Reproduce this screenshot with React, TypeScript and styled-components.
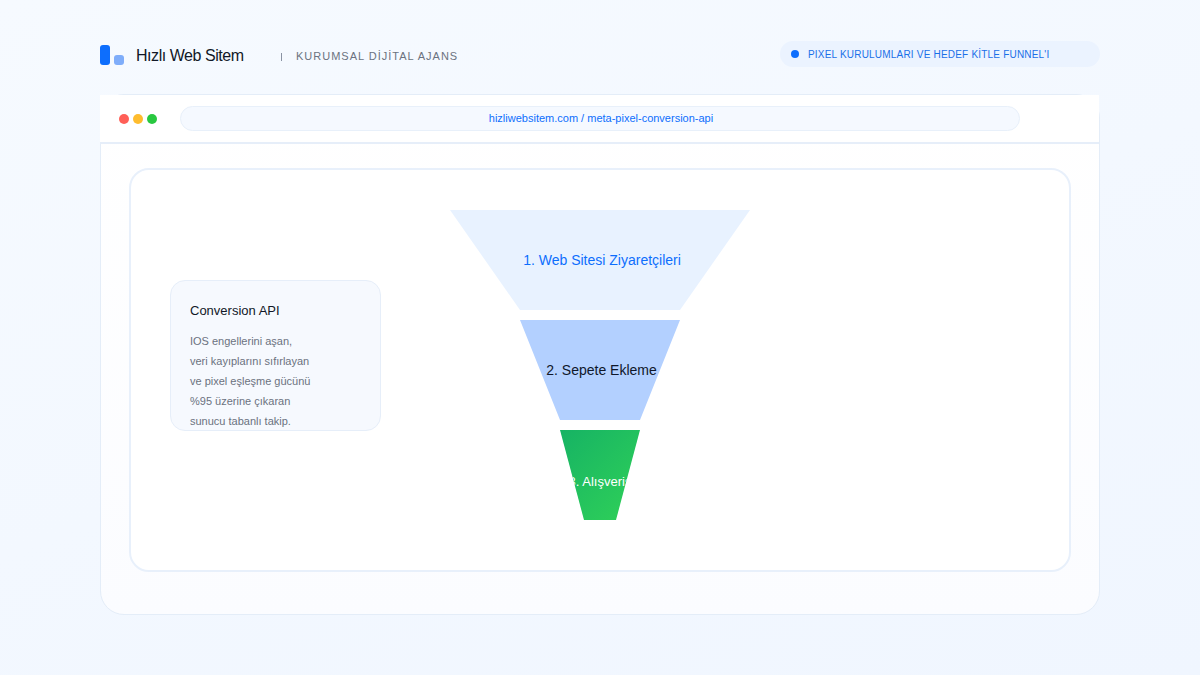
import React from "react";
import styled, { createGlobalStyle } from "styled-components";

const Global = createGlobalStyle`
  html, body { margin: 0; padding: 0; }
  body {
    width: 1200px; height: 675px; overflow: hidden;
    font-family: "Liberation Sans", Arial, sans-serif;
  }
`;

const Page = styled.div`
  width: 1200px; height: 675px; box-sizing: border-box;
  padding: 41px 100px 60px;
  background: linear-gradient(160deg, #f6faff 0%, #f0f6ff 100%);
  display: flex; flex-direction: column;
`;
const Header = styled.header`
  height: 26px; margin-bottom: 27px;
  display: flex; align-items: center; justify-content: space-between;
`;
const Left = styled.div`display: flex; align-items: center; padding-top: 4px;`;
const Logo = styled.div`display: flex; align-items: flex-end; gap: 4px; width: 24px; height: 20px; margin: 0 12px 2px 0;`;
const LogoBar = styled.span<{ $h: number; $c: string }>`
  width: 10px; height: ${p => p.$h}px; border-radius: 3px; background: ${p => p.$c};
`;
const Brand = styled.div`font-size: 16px; letter-spacing: -0.45px; color: #111827; width: 144px;`;
const Divider = styled.span`width: 1px; height: 8px; background: #8a93a3; margin: 1px 15px 0 1px;`;
const Sub = styled.div`font-size: 11px; letter-spacing: 1px; color: #6b7280; margin-left: -1px;`;
const Pill = styled.div`
  width: 320px; height: 26px; box-sizing: border-box; padding-left: 11px;
  border-radius: 13px; background: #ebf3ff;
  display: flex; align-items: center; gap: 9px;
`;
const Dot = styled.span`width: 8px; height: 8px; border-radius: 50%; background: #0d6efd;`;
const PillText = styled.span`font-size: 10px; letter-spacing: 0.2px; color: #1a6fe8;`;

const Window = styled.main`
  flex: 1; box-sizing: border-box;
  border: 1.5px solid #e4edf8; border-radius: 24px;
  background: linear-gradient(180deg, #ffffff 0%, #fbfcff 100%);
  display: flex; flex-direction: column;
`;
const TitleBar = styled.div`
  height: 49px; box-sizing: border-box; margin: 0 0 0 -1.5px; padding-left: 19px;
  background: #fff; border-bottom: 2px solid #e6eef9;
  display: flex; align-items: center;
`;
const Lights = styled.div`display: flex; gap: 4px; margin-right: 23px;`;
const Light = styled.span<{ $c: string }>`width: 10px; height: 10px; border-radius: 50%; background: ${p => p.$c};`;
const Url = styled.div`
  width: 840px; height: 25px; box-sizing: border-box; padding: 0 0 2px 3px;
  border: 1px solid #e8f0fa; border-radius: 12.5px; background: #f5f9ff;
  display: flex; align-items: center; justify-content: center;
  font-size: 11px; color: #0d6efd;
`;
const Body = styled.div`flex: 1; padding: 24px 28px 42px 28px; display: flex;`;
const Card = styled.section`
  flex: 1; box-sizing: border-box;
  background: #fff; border: 2px solid #e8f0fb; border-radius: 20px;
  display: grid; grid-template-columns: 1fr 300px 1fr; align-items: center;
  padding: 40px 0 0;
`;
const Side = styled.aside`
  justify-self: start; align-self: start; margin: 69.5px 0 0 39px;
  width: 211px; height: 151px; box-sizing: border-box; overflow: hidden;
  padding: 21.5px 19px 0;
  background: #f6f9fe; border: 1.5px solid #e6eef9; border-radius: 15px;
`;
const SideTitle = styled.div`font-size: 13px; line-height: 18px; color: #111827; margin-bottom: 11px;`;
const SideText = styled.div`font-size: 11px; line-height: 20px; color: #6b7280;`;
const Funnel = styled.div`align-self: start; display: flex; flex-direction: column; align-items: center; gap: 10px;`;
const Stage = styled.div<{ $w: number; $h: number; $cut: number; $bg: string; $c: string; $fs: number; $pl?: number; $pt?: number }>`
  width: ${p => p.$w}px; height: ${p => p.$h}px; box-sizing: border-box;
  padding: ${p => p.$pt ?? 0}px 0 0 ${p => p.$pl ?? 0}px;
  clip-path: polygon(0 0, 100% 0, ${p => 100 - p.$cut}% 100%, ${p => p.$cut}% 100%);
  background: ${p => p.$bg}; color: ${p => p.$c}; font-size: ${p => p.$fs}px;
  display: flex; align-items: center; justify-content: center; white-space: nowrap;
`;

export default function App() {
  return (
    <Page>
      <Global />
      <Header>
        <Left>
          <Logo>
            <LogoBar $h={20} $c="#0d6efd" />
            <LogoBar $h={10} $c="#7fadfa" />
          </Logo>
          <Brand>Hızlı Web Sitem</Brand>
          <Divider />
          <Sub>KURUMSAL DİJİTAL AJANS</Sub>
        </Left>
        <Pill>
          <Dot />
          <PillText>PIXEL KURULUMLARI VE HEDEF KİTLE FUNNEL'I</PillText>
        </Pill>
      </Header>
      <Window>
        <TitleBar>
          <Lights>
            <Light $c="#ff5f57" />
            <Light $c="#febc2e" />
            <Light $c="#28c840" />
          </Lights>
          <Url>hizliwebsitem.com / meta-pixel-conversion-api</Url>
        </TitleBar>
        <Body>
          <Card>
            <Side>
              <SideTitle>Conversion API</SideTitle>
              <SideText>
                IOS engellerini aşan,<br />
                veri kayıplarını sıfırlayan<br />
                ve pixel eşleşme gücünü<br />
                %95 üzerine çıkaran<br />
                sunucu tabanlı takip.
              </SideText>
            </Side>
            <Funnel>
              <Stage $w={300} $h={100} $cut={23.33} $bg="#e8f2ff" $c="#0d6efd" $fs={14} $pl={4}>1. Web Sitesi Ziyaretçileri</Stage>
              <Stage $w={160} $h={100} $cut={25} $bg="#b3d0ff" $c="#0f172a" $fs={14} $pl={3}>2. Sepete Ekleme</Stage>
              <Stage $w={80} $h={90} $cut={30} $bg="linear-gradient(135deg, #16b364 0%, #30d158 100%)" $c="#fff" $fs={13} $pt={12}>3. Alışveriş</Stage>
            </Funnel>
          </Card>
        </Body>
      </Window>
    </Page>
  );
}
